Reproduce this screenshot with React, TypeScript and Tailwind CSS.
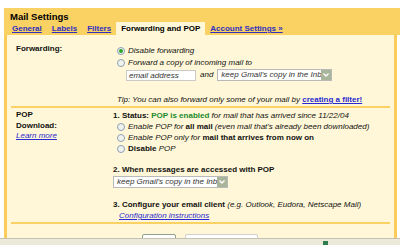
import React from "react";

const Radio = ({ checked }: { checked?: boolean }) => (
  <span className="inline-flex w-[8px] h-[8px] rounded-full border border-[#8aa0b8] bg-[#f3f3ee] items-center justify-center shrink-0 mr-[3px]">
    {checked && <span className="w-[4px] h-[4px] rounded-full bg-[#2ba52b]" />}
  </span>
);

const Select = () => (
  <div className="flex items-center w-[115px] h-[12px] border border-[#b9b9b9] bg-white">
    <span className="flex-1 italic pl-[3px] leading-[10px] overflow-hidden whitespace-nowrap text-[#333]">
      keep Gmail's copy in the Inb
    </span>
    <span className="w-[10px] h-[10px] bg-[#a9b59a] flex items-center justify-center">
      <svg width="8" height="8" viewBox="0 0 8 8">
        <path d="M1.5 2.5 L4 5 L6.5 2.5" stroke="white" strokeWidth="1.4" fill="none" />
      </svg>
    </span>
  </div>
);

export default function App() {
  return (
    <div className="w-[400px] h-[245px] overflow-hidden bg-white flex flex-col font-['Liberation_Sans',Arial,sans-serif] text-[8px] text-[#111]">
      <div className="pt-[8px] pl-[4px] flex-1 flex flex-col min-h-0">
        {/* header */}
        <div className="bg-[#fad163]">
          <div className="h-[14px] pl-[6px] pt-[3px] text-[9.5px] font-bold leading-[11px] text-black">
            Mail Settings
          </div>
          <div className="flex h-[13px] pl-[3px] font-bold leading-[13px]">
            <span className="px-[5px] underline text-[#3030c0]">General</span>
            <span className="px-[5px] underline text-[#3030c0]">Labels</span>
            <span className="px-[5px] underline text-[#3030c0]">Filters</span>
            <span className="px-[5px] bg-[#fff7d7] text-black">Forwarding and POP</span>
            <span className="px-[5px] underline text-[#3030c0]">Account Settings »</span>
          </div>
        </div>
        {/* content */}
        <div className="w-[393px] flex-1 min-h-0 overflow-hidden border-x-[3px] border-[#f9cc5c] bg-[#fff7d7]">
          {/* Forwarding */}
          <div className="flex pl-[9px]">
            <div className="w-[97px] pt-[9px] font-bold leading-[10.5px]">Forwarding:</div>
            <div className="pt-[10px]">
              <div className="flex items-center h-[12px] ml-[4px] italic">
                <Radio checked />
                <span>Disable forwarding</span>
              </div>
              <div className="flex items-center h-[12px] ml-[4px] italic">
                <Radio />
                <span>Forward a copy of incoming mail to</span>
              </div>
              <div className="flex items-center h-[12px] ml-[13px]">
                <div className="w-[70px] h-[11px] border border-[#c9c9c9] bg-white italic leading-[9px] pl-[2px] text-[#333]">
                  email address
                </div>
                <span className="italic mx-[4px]">and</span>
                <Select />
              </div>
              <div className="mt-[13px] h-[11px] leading-[11px] ml-[4px] italic whitespace-nowrap">
                Tip: You can also forward only some of your mail by{" "}
                <span className="not-italic font-bold underline text-[#2a2ad0]">creating a filter!</span>
              </div>
            </div>
          </div>
          <div className="mx-[4px] mt-[1px] h-[2px] bg-[#fad163]" />
          {/* POP */}
          <div className="flex pl-[9px] pt-[2px]">
            <div className="w-[97px] leading-[10.5px]">
              <div className="font-bold">POP</div>
              <div className="font-bold">Download:</div>
              <div className="italic underline text-[#2a2ad0]">Learn more</div>
            </div>
            <div>
              <div className="h-[11px] leading-[11px] whitespace-nowrap">
                <span className="font-bold">1. Status: </span>
                <span className="font-bold text-[#1c8a2c]">POP is enabled</span>
                <span className="italic"> for mail that has arrived since 11/22/04</span>
              </div>
              <div className="flex items-center h-[11px] ml-[4px] whitespace-nowrap">
                <Radio />
                <span className="italic">Enable POP for&nbsp;</span>
                <span className="font-bold">all mail</span>
                <span className="italic">&nbsp;(even mail that's already been downloaded)</span>
              </div>
              <div className="flex items-center h-[11px] ml-[4px] whitespace-nowrap">
                <Radio />
                <span className="italic">Enable POP only for&nbsp;</span>
                <span className="font-bold">mail that arrives from now on</span>
              </div>
              <div className="flex items-center h-[11px] ml-[4px] whitespace-nowrap">
                <Radio />
                <span className="font-bold">Disable</span>
                <span className="italic">&nbsp;POP</span>
              </div>
              <div className="mt-[10px] h-[11px] leading-[11px] font-bold">
                2. When messages are accessed with POP
              </div>
              <div className="mt-[1px]">
                <Select />
              </div>
              <div className="mt-[11px] h-[11px] leading-[11px] whitespace-nowrap">
                <span className="font-bold">3. Configure your email client</span>
                <span className="italic"> (e.g. Outlook, Eudora, Netscape Mail)</span>
              </div>
              <div className="h-[11px] leading-[11px] pl-[6px] italic underline text-[#2a2ad0]">
                Configuration instructions
              </div>
            </div>
          </div>
          <div className="mx-[4px] mt-[1px] h-[2px] bg-[#fad163]" />
          <div className="flex pl-[135px] gap-[9px] mt-[10px]">
            <div className="w-[34px] h-[14px] border border-[#8f9f88] bg-white rounded-[2px]" />
            <div className="w-[73px] h-[14px] border border-[#d0d0d0] bg-white rounded-[2px]" />
          </div>
        </div>
      </div>
      {/* status bar */}
      <div className="h-[7px] shrink-0 bg-[#ece9d8] border-t border-[#c4c1b6] relative">
        <span className="absolute left-[323px] top-[2px] w-[5px] h-[5px] bg-[#2e7d4f]" />
      </div>
    </div>
  );
}
